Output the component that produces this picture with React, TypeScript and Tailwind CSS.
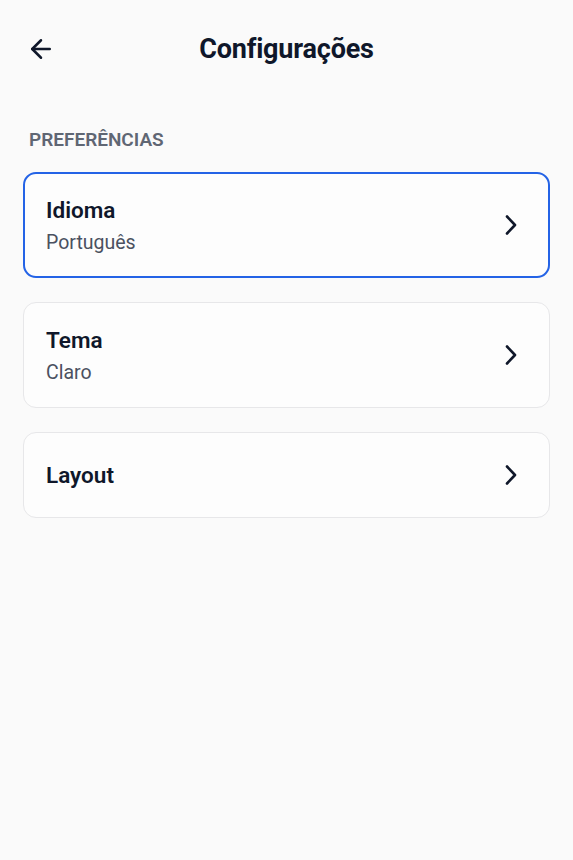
import { ArrowLeft } from "lucide-react";

interface SettingItem {
  id: string;
  title: string;
  value?: string;
  active?: boolean;
}

const items: SettingItem[] = [
  { id: "language", title: "Idioma", value: "Português", active: true },
  { id: "theme", title: "Tema", value: "Claro" },
  { id: "layout", title: "Layout" },
];

function Chevron() {
  return (
    <svg width="14" height="22" viewBox="0 0 14 22" fill="none" className="text-[#0f172a]">
      <path d="M3 2.5 L11 11 L3 19.5" stroke="currentColor" strokeWidth="2.6" strokeLinecap="round" strokeLinejoin="round" />
    </svg>
  );
}

export default function App() {
  return (
    <div className="min-h-[860px] bg-[#fafafa] font-['Roboto',sans-serif] text-[#0f172a]">
      {/* Header */}
      <div className="relative flex items-center justify-center h-[98px]">
        <button className="absolute left-[26px] top-[34px] p-0">
          <ArrowLeft className="w-[30px] h-[30px]" strokeWidth={2} />
        </button>
        <h1 className="text-[27px] font-bold text-[#0f172a] tracking-[-0.2px]">Configurações</h1>
      </div>

      <div className="px-[23px]">
        <h2 className="pl-[6px] pt-[29px] text-[19px] font-semibold text-[#5f6673] leading-[26px]">
          PREFERÊNCIAS
        </h2>

        <div className="mt-[19px] flex flex-col gap-[24px]">
          {items.map((item) => (
            <button
              key={item.id}
              className={
                item.active
                  ? "flex items-center justify-between text-left rounded-[13px] border-2 border-[#2463e6] bg-[#fdfdfd] pl-[21px] pr-[30px] h-[106px]"
                  : "flex items-center justify-between text-left rounded-[13px] border border-[#e7e7e9] bg-[#fdfdfd] pl-[22px] pr-[31px] " +
                    (item.value ? "h-[106px]" : "h-[86px]")
              }
            >
              <div className="flex flex-col">
                <span className="text-[22.5px] font-semibold leading-[30px] text-[#0f172a]">{item.title}</span>
                {item.value && (
                  <span className="mt-[5px] text-[19.5px] leading-[26px] text-[#4b5160]">{item.value}</span>
                )}
              </div>
              <Chevron />
            </button>
          ))}
        </div>
      </div>
    </div>
  );
}
